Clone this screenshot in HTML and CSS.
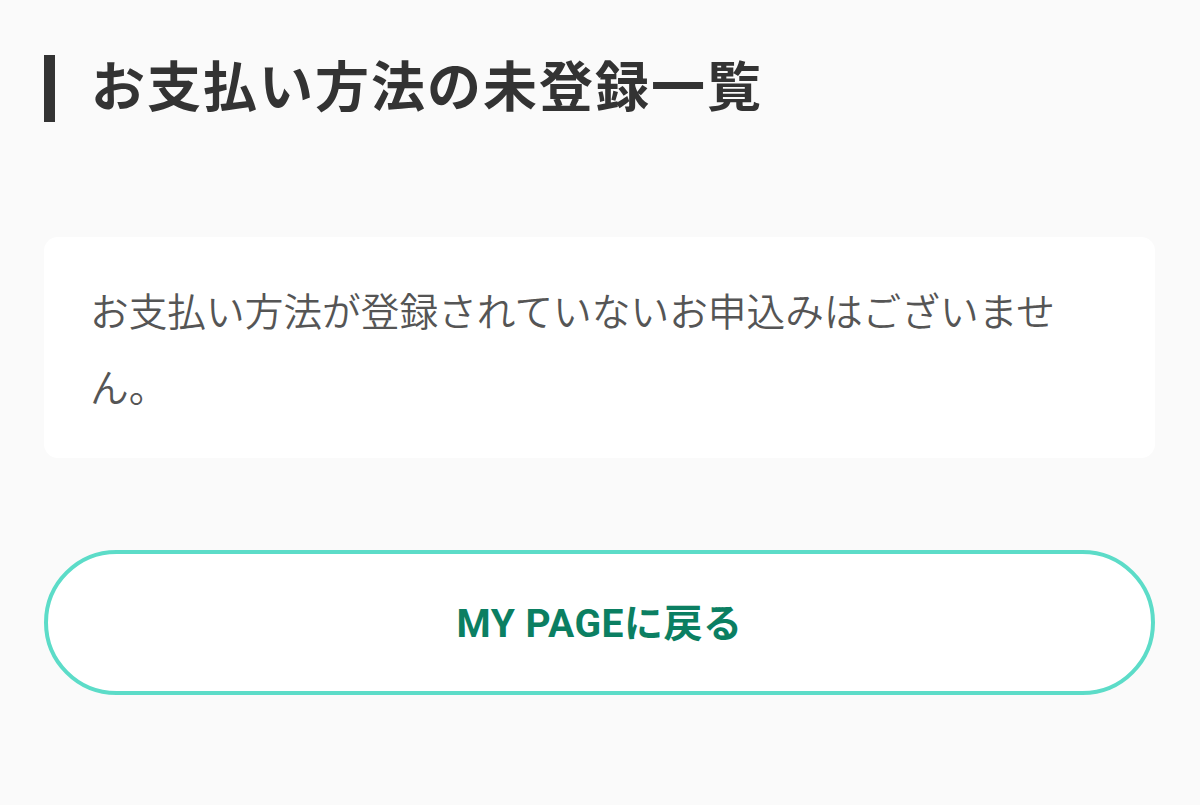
FILE: index.html
```html
<!DOCTYPE html>
<html lang="ja">
<head>
    <meta charset="UTF-8">
    <meta name="viewport" content="width=device-width, initial-scale=1.0">
    <title>お支払い方法の未登録一覧</title>
    <link rel="stylesheet" href="styles.css">
</head>
<body>
    <main class="page">
        <h1 class="page-title">お支払い方法の未登録一覧</h1>

        <section class="notice-card">
            <p class="notice-text">お支払い方法が登録されていないお申込みはございません。</p>
        </section>

        <a class="back-button" href="#">MY PAGEに戻る</a>
    </main>
</body>
</html>
```

FILE: styles.css
```css
:root {
    --bg-color: #fafafa;
    --card-background: #ffffff;
    --heading-color: #333333;
    --text-color: #555555;
    --accent-border: #5cdcc8;
    --accent-text: #0b7f62;
}

body {
    margin: 0;
    padding: 0;
    background-color: var(--bg-color);
    font-family: Roboto, "Noto Sans CJK JP", sans-serif;
}

.page {
    padding: 55px 45px 0 44px;
}

.page-title {
    margin: 0;
    border-left: 11px solid var(--heading-color);
    padding-left: 36px;
    color: var(--heading-color);
    font-size: 54px;
    font-weight: 700;
    line-height: 67px;
    letter-spacing: 2px;
}

.notice-card {
    margin-top: 115px;
    background-color: var(--card-background);
    border-radius: 14px;
    padding: 38px 60px 31px 46px;
}

.notice-text {
    margin: 0;
    color: var(--text-color);
    font-size: 38.7px;
    font-weight: 350;
    line-height: 76px;
}

.back-button {
    display: flex;
    justify-content: center;
    align-items: center;
    margin-top: 92px;
    height: 145px;
    padding-bottom: 6px;
    box-sizing: border-box;
    border: 4px solid var(--accent-border);
    border-radius: 80px;
    background-color: #ffffff;
    color: var(--accent-text);
    font-size: 39px;
    font-weight: 700;
    letter-spacing: 0.5px;
    text-decoration: none;
}
```
